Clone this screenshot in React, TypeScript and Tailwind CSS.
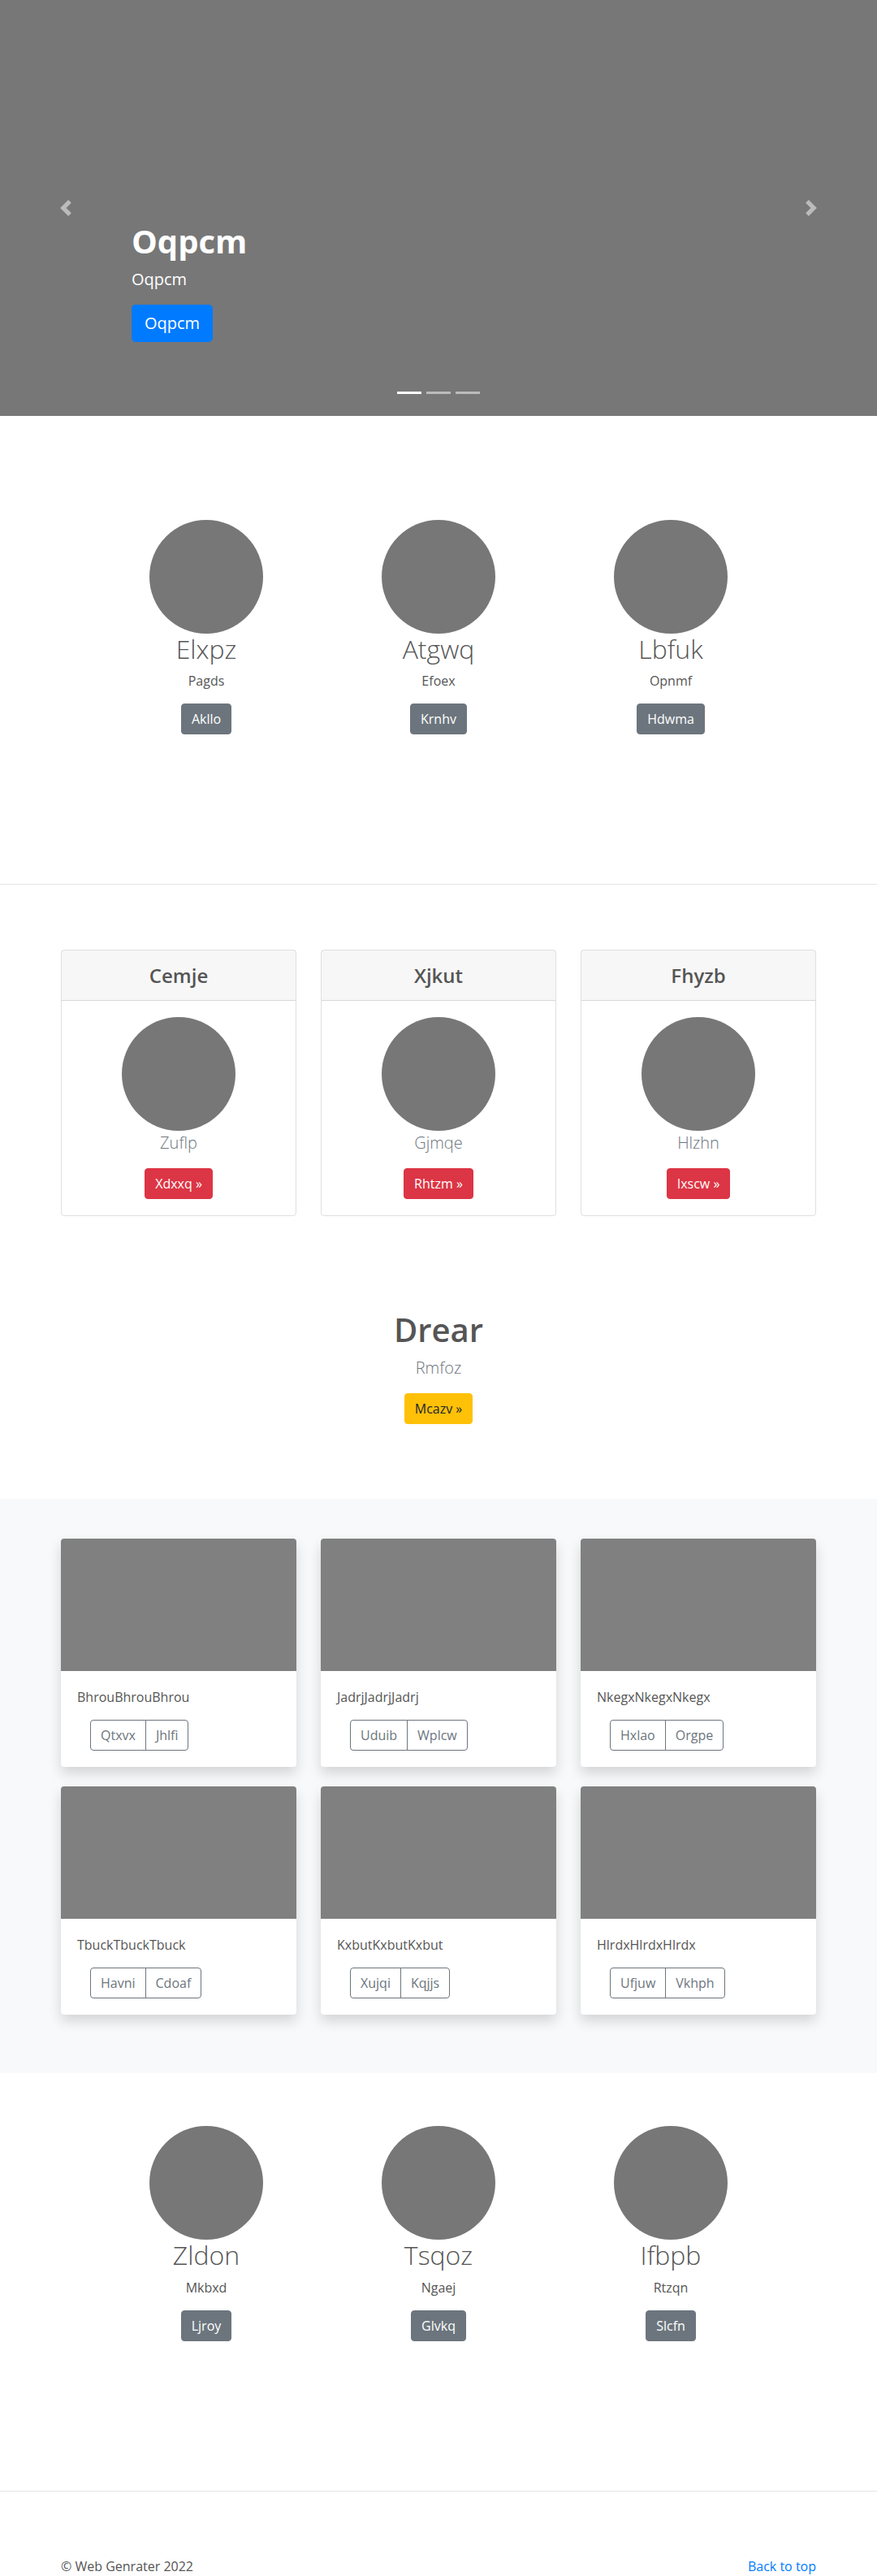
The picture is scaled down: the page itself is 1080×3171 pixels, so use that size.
import React from "react";

const font = { fontFamily: '"Open Sans", "Noto Sans", Arial, sans-serif' };

const team1 = [
  { name: "Elxpz", role: "Pagds", btn: "Akllo" },
  { name: "Atgwq", role: "Efoex", btn: "Krnhv" },
  { name: "Lbfuk", role: "Opnmf", btn: "Hdwma" },
];

const team2 = [
  { name: "Zldon", role: "Mkbxd", btn: "Ljroy" },
  { name: "Tsqoz", role: "Ngaej", btn: "Glvkq" },
  { name: "Ifbpb", role: "Rtzqn", btn: "Slcfn" },
];

const pricing = [
  { title: "Cemje", text: "Zuflp", btn: "Xdxxq »" },
  { title: "Xjkut", text: "Gjmqe", btn: "Rhtzm »" },
  { title: "Fhyzb", text: "Hlzhn", btn: "Ixscw »" },
];

const album = [
  { text: "BhrouBhrouBhrou", a: "Qtxvx", b: "Jhlfi" },
  { text: "JadrjJadrjJadrj", a: "Uduib", b: "Wplcw" },
  { text: "NkegxNkegxNkegx", a: "Hxlao", b: "Orgpe" },
  { text: "TbuckTbuckTbuck", a: "Havni", b: "Cdoaf" },
  { text: "KxbutKxbutKxbut", a: "Xujqi", b: "Kqjjs" },
  { text: "HlrdxHlrdxHlrdx", a: "Ufjuw", b: "Vkhph" },
];

function Chevron({ dir }: { dir: "prev" | "next" }) {
  return (
    <svg width="20" height="20" viewBox="0 0 8 8" fill="#fff">
      {dir === "prev" ? (
        <path d="M5.25 0l-4 4 4 4 1.5-1.5L4.25 4l2.5-2.5L5.25 0z" />
      ) : (
        <path d="M2.75 0l-1.5 1.5L3.75 4l-2.5 2.5L2.75 8l4-4-4-4z" />
      )}
    </svg>
  );
}

function Team({ people }: { people: typeof team1 }) {
  return (
    <div className="w-[858px] mx-auto grid grid-cols-3">
      {people.map((p) => (
        <div key={p.name} className="flex flex-col items-center text-center">
          <div className="w-[140px] h-[140px] rounded-full bg-[#777]" />
          <h2 className="text-[32px] leading-[1.2] font-light text-[#555] mb-2">{p.name}</h2>
          <p className="text-base leading-6 text-[#555] mb-4">{p.role}</p>
          <a className="px-3 py-[6px] text-base leading-6 text-white bg-[#6c757d] border border-[#6c757d] rounded">
            {p.btn}
          </a>
        </div>
      ))}
    </div>
  );
}

export default function App() {
  return (
    <div style={font} className="bg-white text-[#555]">
      {/* Carousel */}
      <div className="relative h-[512px] bg-[#777] overflow-hidden">
        <div className="absolute left-0 top-0 h-full w-[15%] flex items-center justify-center opacity-50">
          <Chevron dir="prev" />
        </div>
        <div className="absolute right-0 top-0 h-full w-[15%] flex items-center justify-center opacity-50">
          <Chevron dir="next" />
        </div>
        <div className="absolute left-[162px] top-[273px] text-white">
          <h1 className="text-[40px] leading-[48px] font-bold mb-2">Oqpcm</h1>
          <p className="text-[20px] leading-[30px] mb-4">Oqpcm</p>
          <a className="inline-block px-4 py-2 text-[20px] leading-[30px] bg-[#007bff] rounded-[5px]">Oqpcm</a>
        </div>
        <div className="absolute left-0 right-0 top-[482px] flex justify-center gap-[6px]">
          <span className="w-[30px] h-[3px] bg-white" />
          <span className="w-[30px] h-[3px] bg-white/50" />
          <span className="w-[30px] h-[3px] bg-white/50" />
        </div>
      </div>

      {/* Team */}
      <section className="pt-[128px]">
        <Team people={team1} />
      </section>
      <hr className="mt-[184px] border-0 border-t border-black/10" />

      {/* Pricing */}
      <section className="mt-[80px] w-[930px] mx-auto grid grid-cols-3 gap-[30px]">
        {pricing.map((c) => (
          <div key={c.title} className="border border-black/[0.125] rounded text-center">
            <div className="bg-black/[0.03] border-b border-black/[0.125] py-4">
              <h4 className="text-2xl leading-[29px] font-semibold text-[#555]">{c.title}</h4>
            </div>
            <div className="p-5 flex flex-col items-center">
              <div className="w-[140px] h-[140px] rounded-full bg-[#777]" />
              <p className="text-[20px] leading-[30px] font-light text-[#6c757d] mb-4">{c.text}</p>
              <a className="px-3 py-[6px] text-base leading-6 text-white bg-[#dc3545] border border-[#dc3545] rounded">
                {c.btn}
              </a>
            </div>
          </div>
        ))}
      </section>

      {/* Jumbotron */}
      <section className="pt-[116px] pb-[92px] text-center flex flex-col items-center">
        <h1 className="text-[40px] leading-[48px] font-semibold text-[#555] mb-2">Drear</h1>
        <p className="text-[20px] leading-[30px] font-light text-[#6c757d] mb-4">Rmfoz</p>
        <a className="px-3 py-[6px] text-base leading-6 text-[#212529] bg-[#ffc107] border border-[#ffc107] rounded">
          Mcazv »
        </a>
      </section>

      {/* Album */}
      <section className="bg-[#f8f9fa] pt-[49px] pb-[48px]">
        <div className="w-[930px] mx-auto grid grid-cols-3 gap-x-[30px]">
          {album.map((c) => (
            <div key={c.text} className="mb-6 bg-white rounded overflow-hidden shadow-[0_8px_16px_rgba(0,0,0,0.15)]">
              <div className="h-[163px] bg-[#808080]" />
              <div className="p-5">
                <p className="text-base leading-6 text-[#555] mb-4">{c.text}</p>
                <div className="ml-4 inline-flex">
                  <span className="px-3 py-[6px] text-base leading-6 text-[#6c757d] border border-[#6c757d] rounded-l">
                    {c.a}
                  </span>
                  <span className="-ml-px px-3 py-[6px] text-base leading-6 text-[#6c757d] border border-[#6c757d] rounded-r">
                    {c.b}
                  </span>
                </div>
              </div>
            </div>
          ))}
        </div>
      </section>

      {/* Team 2 */}
      <section className="pt-[65px]">
        <Team people={team2} />
      </section>
      <hr className="mt-[184px] border-0 border-t border-black/10" />

      {/* Footer */}
      <footer className="pt-[80px]">
        <div className="w-[930px] mx-auto flex justify-between text-base leading-6">
          <p className="text-[#555]">© Web Genrater 2022</p>
          <a className="text-[#007bff]">Back to top</a>
        </div>
      </footer>
    </div>
  );
}
